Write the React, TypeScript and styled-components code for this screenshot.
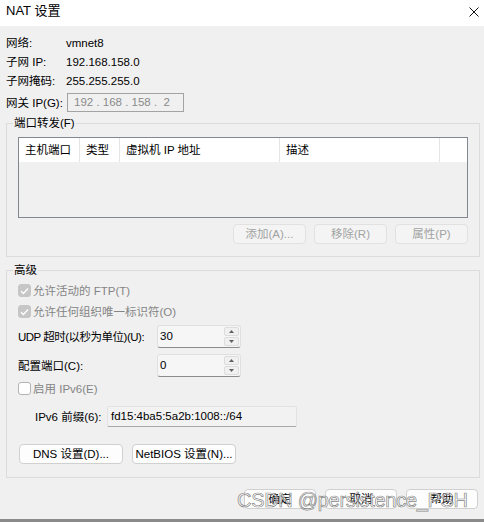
import React from "react";
import styled, { createGlobalStyle } from "styled-components";

const FONT = `"Liberation Sans", "Noto Sans CJK SC", sans-serif`;

const Global = createGlobalStyle`
  html, body { margin: 0; padding: 0; background: #f0f0f0; }
  body { font-family: ${FONT}; font-size: 11.5px; color: #000; }
  * { box-sizing: border-box; }
`;

const Window = styled.div`
  position: relative;
  width: 484px;
  height: 522px;
  display: flex;
  flex-direction: column;
  background: #f0f0f0;
  overflow: hidden;
`;

const TitleBar = styled.div`
  height: 26px;
  flex: none;
  background: #fff;
  display: flex;
  align-items: flex-start;
  justify-content: space-between;
  padding: 3px 5px 0 6px;
`;

const Title = styled.div`
  font-size: 13px;
  line-height: 16px;
`;

const CloseIcon = styled.svg`
  margin-top: 4px;
`;

const Body = styled.div`
  flex: 1;
  display: flex;
  flex-direction: column;
  padding: 0 4px 0 6px;
`;

const InfoGrid = styled.div`
  display: grid;
  grid-template-columns: 60px auto;
  grid-auto-rows: 19px;
  align-items: center;
  margin-top: 7px;
  line-height: 16px;
`;

const GatewayRow = styled.div`
  display: grid;
  grid-template-columns: 61px 117px;
  align-items: center;
  margin-top: 3px;
  line-height: 16px;
`;

const IpBox = styled.div`
  height: 19px;
  border: 1px solid #a3a3a3;
  background: #f0f0f0;
  color: #8a8a8a;
  padding-left: 6px;
  line-height: 17px;
  white-space: pre;
`;

const Group = styled.div<{ $mt: number }>`
  position: relative;
  border: 1px solid #dcdcdc;
  margin-top: ${(p) => p.$mt}px;
  display: flex;
  flex-direction: column;
`;

const Legend = styled.span`
  position: absolute;
  top: -9px;
  left: 6px;
  padding: 0 1px;
  background: #f0f0f0;
  line-height: 16px;
`;

const PortGroup = styled(Group)`
  padding: 13px 11px 12px 11px;
`;

const AdvGroup = styled(Group)`
  padding: 9px 11px 13px 11px;
`;

const Table = styled.div`
  height: 81px;
  border: 1px solid #828790;
  background: #f0f0f0;
`;

const HeaderRow = styled.div`
  display: grid;
  grid-template-columns: 61px 40px 160px 160px 1fr;
  height: 24px;
  background: #fff;
`;

const HeaderCell = styled.div<{ $last?: boolean }>`
  border-right: ${(p) => (p.$last ? "none" : "1px solid #e5e5e5")};
  padding-left: 6px;
  line-height: 24px;
  white-space: nowrap;
`;

const ButtonRow = styled.div<{ $mt: number; $justify: string; $gap: number; $pr?: number; $pl?: number }>`
  display: flex;
  justify-content: ${(p) => p.$justify};
  gap: ${(p) => p.$gap}px;
  margin-top: ${(p) => p.$mt}px;
  padding-right: ${(p) => p.$pr ?? 0}px;
  padding-left: ${(p) => p.$pl ?? 0}px;
`;

const Button = styled.button<{ $w: number; $disabled?: boolean }>`
  width: ${(p) => p.$w}px;
  height: 20px;
  padding: 0;
  border-radius: 4px;
  border: 1px solid ${(p) => (p.$disabled ? "#e1e1e1" : "#d0d0d0")};
  background: ${(p) => (p.$disabled ? "#f4f4f4" : "#fdfdfd")};
  color: ${(p) => (p.$disabled ? "#a2a2a2" : "#000")};
  font-family: ${FONT};
  font-size: 11.5px;
  line-height: 18px;
  white-space: nowrap;
`;

const CheckRow = styled.div<{ $mt?: number }>`
  display: flex;
  align-items: center;
  gap: 2px;
  height: 21px;
  margin-top: ${(p) => p.$mt ?? 0}px;
  color: #858585;
  line-height: 16px;
`;

const CheckBox = styled.span<{ $checked?: boolean }>`
  width: 13px;
  height: 13px;
  border-radius: 3px;
  display: flex;
  align-items: center;
  justify-content: center;
  background: ${(p) => (p.$checked ? "#c6c6c6" : "#fff")};
  border: 1px solid ${(p) => (p.$checked ? "#c6c6c6" : "#b3b3b3")};
`;

const FieldRow = styled.div<{ $mt: number }>`
  display: grid;
  grid-template-columns: 139px 84px;
  align-items: center;
  margin-top: ${(p) => p.$mt}px;
  line-height: 16px;
`;

const FieldLabel = styled.span<{ $tight?: boolean }>`
  white-space: nowrap;
  letter-spacing: ${(p) => (p.$tight ? "-0.5px" : "0")};
`;

const SpinBox = styled.div`
  height: 23px;
  display: flex;
  border: 1px solid #e0e0e0;
  border-bottom-color: #8c8c8c;
  border-radius: 3px;
  background: #f6f6f6;
`;

const SpinValue = styled.div`
  flex: 1;
  padding: 2px 0 0 2px;
  line-height: 16px;
`;

const SpinButtons = styled.div`
  width: 15px;
  margin: 1px 1px 1px 0;
  display: flex;
  flex-direction: column;
  gap: 1px;
`;

const SpinBtn = styled.div`
  flex: 1;
  border: 1px solid #dcdcdc;
  border-radius: 2px;
  background: #f0f0f0;
  display: flex;
  align-items: center;
  justify-content: center;
`;

const PrefixRow = styled.div`
  display: grid;
  grid-template-columns: 72px 190px;
  align-items: center;
  margin-top: 7px;
  padding-left: 17px;
  line-height: 16px;
  white-space: nowrap;
`;

const PrefixBox = styled.div`
  height: 21px;
  border: 1px solid #e2e2e2;
  border-bottom-color: #a8a8a8;
  border-radius: 2px;
  background: #f2f2f2;
  padding: 1px 0 0 3px;
  line-height: 16px;
`;

const BottomEdge = styled.div`
  height: 3px;
  flex: none;
  background: #8a8a8a;
`;

const Watermark = styled.div`
  position: absolute;
  left: 237px;
  top: 490px;
  font-family: "Liberation Sans", sans-serif;
  font-size: 20px;
  line-height: 20px;
  letter-spacing: -0.3px;
  color: rgba(255, 255, 255, 0.55);
  -webkit-text-stroke: 0.7px rgba(110, 110, 110, 0.85);
  white-space: nowrap;
  pointer-events: none;
`;

const Check = () => (
  <svg width="9" height="8" viewBox="0 0 9 8">
    <path d="M1 4.2 L3.4 6.5 L8 1.5" stroke="#fff" strokeWidth="1.3" fill="none" />
  </svg>
);

const Arrow = ({ up }: { up?: boolean }) => (
  <svg width="5" height="3" viewBox="0 0 5 3">
    <path d={up ? "M0 3 L2.5 0 L5 3 Z" : "M0 0 L5 0 L2.5 3 Z"} fill="#606060" />
  </svg>
);

const Spin = ({ value }: { value: string }) => (
  <SpinBox>
    <SpinValue>{value}</SpinValue>
    <SpinButtons>
      <SpinBtn>
        <Arrow up />
      </SpinBtn>
      <SpinBtn>
        <Arrow />
      </SpinBtn>
    </SpinButtons>
  </SpinBox>
);

export default function App() {
  return (
    <Window>
      <Global />
      <TitleBar>
        <Title>NAT 设置</Title>
        <CloseIcon width="10" height="10" viewBox="0 0 10 10">
          <path d="M0.5 0.5 L9.5 9.5 M9.5 0.5 L0.5 9.5" stroke="#111" strokeWidth="1" />
        </CloseIcon>
      </TitleBar>
      <Body>
        <InfoGrid>
          <span>网络:</span>
          <span>vmnet8</span>
          <span>子网 IP:</span>
          <span>192.168.158.0</span>
          <span>子网掩码:</span>
          <span>255.255.255.0</span>
        </InfoGrid>
        <GatewayRow>
          <span>网关 IP(G):</span>
          <IpBox>{"192 . 168 . 158 .  2"}</IpBox>
        </GatewayRow>

        <PortGroup $mt={11}>
          <Legend>端口转发(F)</Legend>
          <Table>
            <HeaderRow>
              <HeaderCell>主机端口</HeaderCell>
              <HeaderCell>类型</HeaderCell>
              <HeaderCell>虚拟机 IP 地址</HeaderCell>
              <HeaderCell>描述</HeaderCell>
              <HeaderCell $last />
            </HeaderRow>
          </Table>
          <ButtonRow $mt={6} $justify="flex-end" $gap={8}>
            <Button $w={73} $disabled>添加(A)...</Button>
            <Button $w={73} $disabled>移除(R)</Button>
            <Button $w={73} $disabled>属性(P)</Button>
          </ButtonRow>
        </PortGroup>

        <AdvGroup $mt={13}>
          <Legend>高级</Legend>
          <CheckRow>
            <CheckBox $checked>
              <Check />
            </CheckBox>
            <span>允许活动的 FTP(T)</span>
          </CheckRow>
          <CheckRow>
            <CheckBox $checked>
              <Check />
            </CheckBox>
            <span>允许任何组织唯一标识符(O)</span>
          </CheckRow>
          <FieldRow $mt={3}>
            <FieldLabel $tight>UDP 超时(以秒为单位)(U):</FieldLabel>
            <Spin value="30" />
          </FieldRow>
          <FieldRow $mt={6}>
            <FieldLabel>配置端口(C):</FieldLabel>
            <Spin value="0" />
          </FieldRow>
          <CheckRow $mt={1}>
            <CheckBox />
            <span>启用 IPv6(E)</span>
          </CheckRow>
          <PrefixRow>
            <span>IPv6 前缀(6):</span>
            <PrefixBox>fd15:4ba5:5a2b:1008::/64</PrefixBox>
          </PrefixRow>
          <ButtonRow $mt={17} $justify="flex-start" $gap={9} $pl={1}>
            <Button $w={104}>DNS 设置(D)...</Button>
            <Button $w={104}>NetBIOS 设置(N)...</Button>
          </ButtonRow>
        </AdvGroup>

        <ButtonRow $mt={11} $justify="flex-end" $gap={9} $pr={2}>
          <Button $w={72}>确定</Button>
          <Button $w={72}>取消</Button>
          <Button $w={72}>帮助</Button>
        </ButtonRow>
      </Body>
      <BottomEdge />
      <Watermark>CSDN @persistence_PSH</Watermark>
    </Window>
  );
}
